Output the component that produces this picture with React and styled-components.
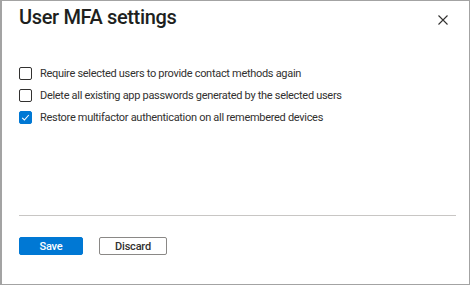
import React, { useState } from 'react';
import styled, { createGlobalStyle } from 'styled-components';

const Global = createGlobalStyle`
  body {
    margin: 0;
    background: #ffffff;
    font-family: Roboto, "Open Sans", sans-serif;
    color: #323130;
  }
`;

const Panel = styled.div`
  box-sizing: border-box;
  width: 470px;
  height: 285px;
  border: 1px solid #a3a3a3;
  border-left-width: 2px;
  display: flex;
  flex-direction: column;
  background: #fff;
`;

const Header = styled.div`
  height: 44px;
  padding: 2px 0 0 17px;
  box-sizing: border-box;
  display: flex;
  align-items: flex-start;
  justify-content: space-between;
`;

const Title = styled.h1`
  margin: 0;
  font-size: 20px;
  line-height: 28px;
  font-weight: 500;
  letter-spacing: -0.35px;
  color: #201f1e;
`;

const CloseButton = styled.button`
  border: 0;
  background: none;
  padding: 0;
  width: 10px;
  height: 10px;
  margin: 12px 21px 0 0;
  display: flex;
  cursor: pointer;
`;

const Body = styled.div`
  flex: 1;
  padding: 21.7px 0 0 17px;
  display: flex;
  flex-direction: column;
  gap: 9.3px;
`;

const Row = styled.label`
  display: flex;
  align-items: center;
  gap: 8px;
  font-size: 11px;
  line-height: 13px;
  letter-spacing: -0.3px;
  color: #323130;
  cursor: pointer;
`;

const Box = styled.span`
  box-sizing: border-box;
  width: 13px;
  height: 13px;
  border-radius: 2px;
  border: 1px solid ${p => (p.checked ? '#0078d4' : '#323130')};
  background: ${p => (p.checked ? '#0078d4' : '#fff')};
  display: flex;
  align-items: center;
  justify-content: center;
  flex-shrink: 0;
`;

const Divider = styled.div`
  height: 1px;
  background: #c8c6c4;
  margin: 0 13px 0 17px;
`;

const Footer = styled.div`
  height: 68px;
  box-sizing: border-box;
  padding: 21px 0 0 17px;
  display: flex;
  gap: 16px;
`;

const Button = styled.button`
  box-sizing: border-box;
  height: 18px;
  width: ${p => p.w}px;
  border-radius: 2px;
  font-family: inherit;
  font-size: 11px;
  font-weight: 500;
  letter-spacing: -0.2px;
  padding: 0;
  cursor: pointer;
  border: 1px solid ${p => (p.primary ? '#0078d4' : '#8a8886')};
  background: ${p => (p.primary ? '#0078d4' : '#fff')};
  color: ${p => (p.primary ? '#fff' : '#323130')};
`;

const options = [
  'Require selected users to provide contact methods again',
  'Delete all existing app passwords generated by the selected users',
  'Restore multifactor authentication on all remembered devices',
];

const App = () => {
  const [checked, setChecked] = useState([false, false, true]);
  const toggle = i => setChecked(c => c.map((v, j) => (j === i ? !v : v)));

  return (
    <>
      <Global />
      <Panel>
        <Header>
          <Title>User MFA settings</Title>
          <CloseButton aria-label="Close">
            <svg width="10" height="10" viewBox="0 0 10 10">
              <path d="M0.5 0.5 L9.5 9.5 M9.5 0.5 L0.5 9.5" stroke="#323130" strokeWidth="1.1" />
            </svg>
          </CloseButton>
        </Header>
        <Body>
          {options.map((text, i) => (
            <Row key={i} onClick={() => toggle(i)}>
              <Box checked={checked[i]}>
                {checked[i] && (
                  <svg width="9" height="9" viewBox="0 0 9 9">
                    <path d="M1.2 4.8 L3.4 7 L7.8 2" fill="none" stroke="#fff" strokeWidth="1.1" />
                  </svg>
                )}
              </Box>
              {text}
            </Row>
          ))}
        </Body>
        <Divider />
        <Footer>
          <Button primary w={64}>Save</Button>
          <Button w={68}>Discard</Button>
        </Footer>
      </Panel>
    </>
  );
};

export default App;
